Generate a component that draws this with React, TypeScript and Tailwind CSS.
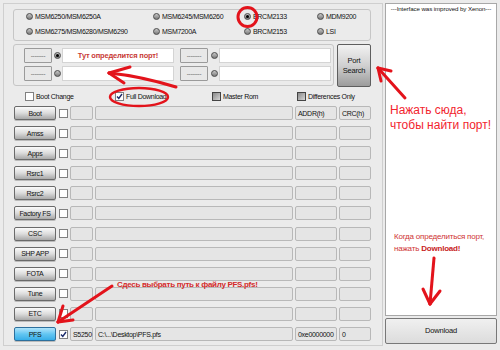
import React from 'react';

const font = { fontFamily: '"Liberation Sans", Arial, sans-serif' };

function Radio({ checked }: { checked?: boolean }) {
  return (
    <span className="w-[7px] h-[7px] rounded-full border border-[#4a4a4a] bg-linear-to-b from-[#c8c8c8] to-[#7c7c7c] flex items-center justify-center shrink-0">
      {checked && <span className="w-[3px] h-[3px] rounded-full bg-black" />}
    </span>
  );
}

function Check({ checked, dark }: { checked?: boolean; dark?: boolean }) {
  return (
    <span
      className={
        'w-[9px] h-[9px] border shrink-0 flex items-center justify-center ' +
        (dark ? 'border-[#444] bg-linear-to-br from-[#8a8a8a] to-[#d6d6d6]' : 'border-[#808080] bg-white')
      }
    >
      {checked && (
        <svg width="7" height="7" viewBox="0 0 7 7">
          <path d="M1 3.5 L2.8 5.5 L6 1" fill="none" stroke="#1a2a6a" strokeWidth="1.4" />
        </svg>
      )}
    </span>
  );
}

function RadioItem({ label, checked, w }: { label: string; checked?: boolean; w?: string }) {
  return (
    <div className={'flex items-center gap-[2px] ' + (w ?? '')}>
      <Radio checked={checked} />
      <span className="text-[7px] leading-none tracking-[-0.3px] text-[#111] whitespace-nowrap">{label}</span>
    </div>
  );
}

function SmallBtn() {
  return (
    <div className="w-[28px] h-[15px] border border-[#9a9a9a] rounded-[1px] bg-[#e8e8e8] flex items-center justify-center text-[6px] leading-none text-[#333] tracking-[-0.2px] shrink-0">
      --------
    </div>
  );
}

function PortField({ text }: { text?: string }) {
  return (
    <div className="w-[112px] h-[15px] bg-white border border-[#d4d4d4] flex items-center justify-center shrink-0">
      {text && (
        <span className="text-[7.5px] font-bold leading-none tracking-[-0.2px] text-[#c83a36] whitespace-nowrap">{text}</span>
      )}
    </div>
  );
}

const rows = [
  { name: 'Boot', addr: 'ADDR(h)', crc: 'CRC(h)' },
  { name: 'Amss' },
  { name: 'Apps' },
  { name: 'Rsrc1' },
  { name: 'Rsrc2' },
  { name: 'Factory FS' },
  { name: 'CSC', dark: true },
  { name: 'SHP APP', dark: true },
  { name: 'FOTA' },
  { name: 'Tune' },
  { name: 'ETC', dark: true },
  { name: 'PFS', blue: true, checked: true, small: 'S5250', path: 'C:\\...\\Desktop\\PFS.pfs', addr: '0xe0000000', crc: '0' },
] as {
  name: string;
  addr?: string;
  crc?: string;
  dark?: boolean;
  blue?: boolean;
  checked?: boolean;
  small?: string;
  path?: string;
}[];

const field = 'h-[14px] border border-[#b8b8b8] rounded-[2px] bg-[#e5e5e5] flex items-center px-[2px] text-[7px] leading-none tracking-[-0.3px] text-[#111] whitespace-nowrap shrink-0';

export default function App() {
  return (
    <div className="relative w-[500px] h-[350px] bg-[#ebebeb] overflow-hidden flex pt-[3px] pl-[3px] gap-[2px]" style={font}>
      {/* Left frame */}
      <div className="w-[380px] h-[343px] border border-[#cfcfcf] flex flex-col">
        {/* chip group */}
        <div className="ml-[9px] mt-[5px] w-[358px] h-[32px] border border-[#c6c6c6] rounded-[3px] flex flex-col pt-[2px] pl-[12px] gap-[7px]">
          <div className="h-[8px] flex items-center">
            <RadioItem label="MSM6250/MSM6250A" w="w-[127px]" />
            <RadioItem label="MSM6245/MSM6260" w="w-[91px]" />
            <RadioItem label="BRCM2133" checked w="w-[73px]" />
            <RadioItem label="MDM9200" />
          </div>
          <div className="h-[8px] flex items-center">
            <RadioItem label="MSM6275/MSM6280/MSM6290" w="w-[127px]" />
            <RadioItem label="MSM7200A" w="w-[91px]" />
            <RadioItem label="BRCM2153" w="w-[73px]" />
            <RadioItem label="LSI" />
          </div>
        </div>

        {/* port group + search */}
        <div className="ml-[9px] mt-[3px] flex gap-[3px]">
          <div className="w-[321px] h-[42px] border border-[#c6c6c6] rounded-[3px] flex flex-col pt-[3px] pl-[10px] gap-[3px]">
            <div className="flex items-center h-[15px]">
              <SmallBtn />
              <span className="ml-[2px] mr-[1px]"><Radio checked /></span>
              <PortField text="Тут определится порт!" />
              <span className="ml-[6px]" />
              <SmallBtn />
              <span className="ml-[3px] mr-[1px]"><Radio /></span>
              <PortField />
            </div>
            <div className="flex items-center h-[15px]">
              <SmallBtn />
              <span className="ml-[2px] mr-[1px]"><Radio /></span>
              <PortField />
              <span className="ml-[6px]" />
              <SmallBtn />
              <span className="ml-[3px] mr-[1px]"><Radio /></span>
              <PortField />
            </div>
          </div>
          <div className="w-[34px] h-[43px] border border-[#5e5e5e] rounded-[2px] bg-linear-to-b from-[#f2f2f2] via-[#d0d0d0] to-[#9c9c9c] flex flex-col items-center justify-center text-[7.5px] leading-[10px] text-[#111] tracking-[-0.2px]">
            <span>Port</span>
            <span>Search</span>
          </div>
        </div>

        {/* options row */}
        <div className="mt-[2px] h-[14px] flex items-center pl-[21px]">
          <div className="w-[90px] flex items-center gap-[2px]">
            <Check />
            <span className="text-[7px] leading-none tracking-[-0.3px] text-[#111]">Boot Change</span>
          </div>
          <div className="w-[97px] flex items-center gap-[2px]">
            <Check checked />
            <span className="text-[7px] leading-none tracking-[-0.3px] text-[#111]">Full Download</span>
          </div>
          <div className="w-[85px] flex items-center gap-[2px]">
            <Check dark />
            <span className="text-[7px] leading-none tracking-[-0.3px] text-[#111]">Master Rom</span>
          </div>
          <div className="flex items-center gap-[2px]">
            <Check dark />
            <span className="text-[7px] leading-none tracking-[-0.3px] text-[#111]">Differences Only</span>
          </div>
        </div>

        {/* file rows */}
        <div className="mt-[3px] pl-[10px] flex flex-col gap-[6.1px]">
          {rows.map((r) => (
            <div key={r.name} className="flex items-center h-[14px]">
              <div
                className={
                  'w-[42px] h-[14px] rounded-[2px] border flex items-center justify-center text-[7px] leading-none tracking-[-0.3px] text-[#111] whitespace-nowrap shrink-0 shadow-[0_1px_0_#bbb] ' +
                  (r.blue
                    ? 'border-[#2d6f9c] bg-linear-to-b from-[#aee4fb] via-[#62c6f2] to-[#36aee8]'
                    : 'border-[#6a6a6a] bg-linear-to-b from-[#fbfbfb] via-[#dcdcdc] to-[#a9a9a9]')
                }
              >
                {r.name}
              </div>
              <span className="ml-[3px]"><Check checked={r.checked} /></span>
              <div className={field + ' ml-[2px] w-[23px]'}>{r.small ?? ''}</div>
              <div className={field + ' ml-[2px] w-[198px]'}>{r.path ?? ''}</div>
              <div className={field + ' ml-[2px] w-[42px] ' + (r.dark ? 'border-[#777]' : '')}>{r.addr ?? ''}</div>
              <div className={field + ' ml-[2px] w-[32px]'}>{r.crc ?? ''}</div>
            </div>
          ))}
        </div>
      </div>

      {/* Right column */}
      <div className="w-[112px] flex flex-col gap-[2px]">
        <div className="h-[313px] bg-white border border-[#a8a8a8] flex flex-col">
          <div className="text-[6.2px] leading-[9px] text-[#111] text-center whitespace-nowrap tracking-[-0.1px]">
            ---Interface was improved by Xenon---
          </div>
          <div className="mt-[90px] pl-[4px] text-[12px] leading-[15px] text-[#f2242e] whitespace-nowrap">
            <div>Нажать сюда,</div>
            <div>чтобы найти порт!</div>
          </div>
          <div className="mt-[98px] pl-[8px] text-[8px] leading-[12px] text-[#cf3434] whitespace-nowrap tracking-[-0.2px]">
            <div>Когда определиться порт,</div>
            <div>
              нажать <span className="font-bold text-[#c81e1e]">Download!</span>
            </div>
          </div>
        </div>
        <div className="h-[26px] border border-[#787878] rounded-[2px] bg-linear-to-b from-[#f0f0f0] to-[#dcdcdc] flex items-center justify-center text-[7.5px] text-[#111] tracking-[-0.2px]">
          Download
        </div>
      </div>

      {/* Annotation text over rows */}
      <div className="absolute left-[117px] top-[280px] text-[8px] leading-[9px] font-bold text-[#d42a2a] whitespace-nowrap tracking-[-0.3px]">
        Сдесь выбрать путь к файлу PFS.pfs!
      </div>

      {/* Red annotations */}
      <svg className="absolute inset-0 pointer-events-none" width="500" height="350" viewBox="0 0 500 350">
        <g fill="none" stroke="#e3131b" strokeWidth="3" strokeLinecap="round" strokeLinejoin="round">
          <circle cx="247.5" cy="17" r="9.5" />
          <ellipse cx="139" cy="97" rx="29" ry="9" strokeWidth="2.5" />
          <path d="M176 87 Q140 76 109 73" />
          <path d="M109 73 L130 67" />
          <path d="M109 73 L124 83" />
          <path d="M405 98 L378 68" />
          <path d="M378 68 L391 71" />
          <path d="M378 68 L381 81" />
          <path d="M434 258 L430 304" />
          <path d="M430 304 L423 289" />
          <path d="M430 304 L440 291" />
          <path d="M112 286 L58 322" />
          <path d="M58 322 L63 306" />
          <path d="M58 322 L73 320" />
        </g>
      </svg>
    </div>
  );
}
